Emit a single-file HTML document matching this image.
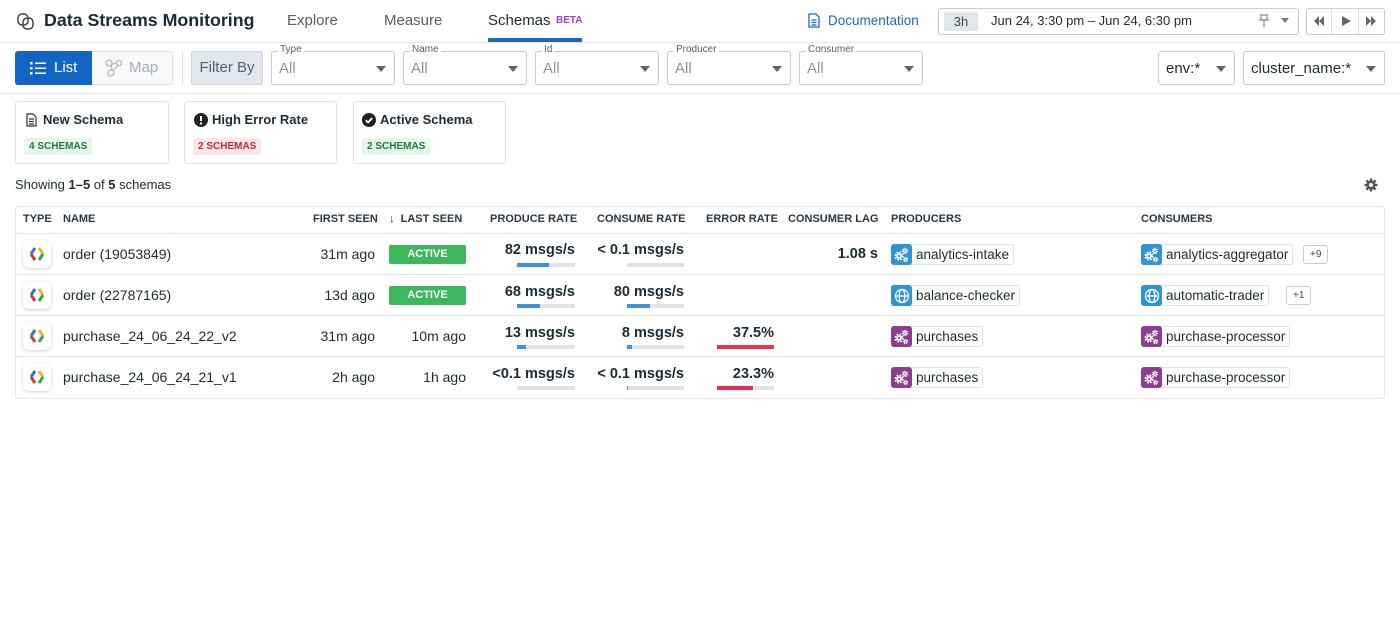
<!DOCTYPE html>
<html><head><meta charset="utf-8"><style>
*{box-sizing:border-box;margin:0;padding:0}
body{width:1400px;height:630px;background:#fff;font-family:"Liberation Sans",sans-serif;color:#1c2b34;position:relative;overflow:hidden;font-size:14px}
.a{position:absolute;white-space:nowrap}
.dd{position:absolute;top:51px;height:34px;border:1px solid #c8ccd2;border-radius:3px;background:#fff}
.dd .l{position:absolute;left:6px;top:-8px;background:#fff;padding:0 2px;font-size:10px;color:#55606a}
.dd .v{position:absolute;left:7px;top:8px;font-size:15px;color:#8a939b}
.car{position:absolute;width:0;height:0;border-left:5px solid transparent;border-right:5px solid transparent;border-top:6px solid #5a6470;top:14px}
.card{position:absolute;top:101px;height:63px;border:1px solid #dfe2e6;border-radius:3px}
.card .t{position:absolute;left:10px;top:10px;font-size:13px;font-weight:bold;color:#1c2b34}
.card .b{position:absolute;left:8px;top:36px;height:17px;padding:0 5px;font-size:10px;font-weight:bold;line-height:17px;border-radius:2px}
.th{position:absolute;top:213px;font-size:11px;font-weight:bold;color:#2b3842}
.row{position:absolute;left:15px;width:1370px;height:41px;border-top:1px solid #e3e6ea}
.r{position:absolute;text-align:right;font-size:14px}
.big{font-size:14.5px;font-weight:bold}
.bar{position:absolute;height:4px;background:#dfe3ea}
.bar i{position:absolute;left:0;top:0;height:4px;background:#3c91e0}
.tag{position:absolute;height:21px;border:1px solid #e0e3e7;border-radius:3px;padding:0 4px 0 24px;font-size:13.5px;line-height:19px;background:#fff}
.tag b{position:absolute;left:-1px;top:-1px;width:21px;height:21px;border-radius:3px}
.blue{background:#3293d1}.purp{background:#8c3e8f}
.more{position:absolute;height:19px;border:1px solid #c9cdd2;border-radius:3px;font-size:10px;line-height:17px;padding:0 6px;color:#444}
.act{position:absolute;left:389px;width:77px;height:19px;background:#3db65c;border-radius:2px;color:#fff;font-size:11px;font-weight:bold;text-align:center;line-height:19px}
.ic{position:absolute;left:23px;width:28px;height:28px;border-radius:6px;box-shadow:0 1px 3px rgba(0,0,0,.18);background:#fff}
.ic svg{position:absolute;left:4px;top:4px}
.g{position:absolute;left:2px;top:2px}
</style></head><body>
<svg class="a" style="left:16px;top:12px" width="20" height="20" viewBox="0 0 20 20" fill="none" stroke="#444" stroke-width="1.5"><rect x="2" y="2" width="10" height="11" rx="4"/><rect x="7" y="6" width="10" height="11" rx="4"/></svg>
<div class="a" style="left:44px;top:10px;font-size:17.8px;font-weight:bold;color:#1c2b34">Data Streams Monitoring</div>
<div class="a" style="left:287px;top:12px;font-size:15px;color:#555f68">Explore</div>
<div class="a" style="left:384px;top:12px;font-size:15px;color:#555f68">Measure</div>
<div class="a" style="left:488px;top:12px;font-size:15px;color:#1c2b34">Schemas</div>
<div class="a" style="left:556px;top:15px;font-size:10px;font-weight:bold;color:#a739e3">BETA</div>
<div class="a" style="left:488px;top:38px;width:94px;height:4px;background:#1f68c0"></div>
<div class="a" style="left:0;top:42px;width:1400px;height:1px;background:#e3e6ea"></div>
<svg class="a" style="left:808px;top:13px" width="12" height="15" viewBox="0 0 12 15" fill="none" stroke="#1f68c0" stroke-width="1.3"><path d="M1 1h7l3 3v10H1z"/><path d="M3.5 7h5M3.5 9.5h5M3.5 12h5"/></svg>
<div class="a" style="left:828px;top:13px;font-size:13.5px;color:#1f68c0">Documentation</div>
<div class="a" style="left:938px;top:8px;width:361px;height:27px;border:1px solid #c8ccd2;border-radius:3px"></div>
<div class="a" style="left:944px;top:12px;width:34px;height:19px;background:#e3e6ec;border-radius:2px;font-size:13px;text-align:center;line-height:19px;color:#444">3h</div>
<div class="a" style="left:991px;top:13px;font-size:13px;color:#1c2b34">Jun 24, 3:30 pm – Jun 24, 6:30 pm</div>
<svg class="a" style="left:1258px;top:14px" width="12" height="14" viewBox="0 0 12 14" fill="none" stroke="#888" stroke-width="1.2"><path d="M2 1h8M3 1v5h6V1M1 6h10M6 6v7"/></svg>
<div class="car" style="left:1281px;top:18px;border-top-color:#777;border-width:5px 4px 0 4px"></div>
<div class="a" style="left:1306px;top:8px;width:79px;height:27px;border:1px solid #c8ccd2;border-radius:3px"></div>
<div class="a" style="left:1331px;top:9px;width:1px;height:25px;background:#dde0e4"></div>
<div class="a" style="left:1358px;top:9px;width:1px;height:25px;background:#dde0e4"></div>
<svg class="a" style="left:1313px;top:15px" width="12" height="12" viewBox="0 0 12 12" fill="#666"><path d="M6 1L1 6l5 5zM11 1L6 6l5 5z"/></svg>
<svg class="a" style="left:1340px;top:15px" width="12" height="12" viewBox="0 0 12 12" fill="#666"><path d="M2 1l9 5-9 5z"/></svg>
<svg class="a" style="left:1365px;top:15px" width="12" height="12" viewBox="0 0 12 12" fill="#666"><path d="M1 1l5 5-5 5zM6 1l5 5-5 5z"/></svg>
<div class="a" style="left:15px;top:51px;width:158px;height:34px;border:1px solid #dfe2e6;border-radius:3px;background:#f7f8fa"></div>
<div class="a" style="left:15px;top:51px;width:77px;height:34px;background:#1265c2;border-radius:3px 0 0 3px"></div>
<svg class="a" style="left:30px;top:60px" width="16" height="16" viewBox="0 0 16 16" fill="#fff"><rect x="0" y="2" width="2.5" height="2.5"/><rect x="0" y="7" width="2.5" height="2.5"/><rect x="0" y="12" width="2.5" height="2.5"/><rect x="5" y="2.5" width="11" height="1.5"/><rect x="5" y="7.5" width="11" height="1.5"/><rect x="5" y="12.5" width="11" height="1.5"/></svg>
<div class="a" style="left:54px;top:59px;font-size:15px;color:#fff">List</div>
<svg class="a" style="left:104px;top:58px" width="20" height="20" viewBox="0 0 20 20" fill="none" stroke="#b4bac1" stroke-width="1.3"><circle cx="5" cy="5" r="3"/><circle cx="15" cy="5" r="2.5"/><circle cx="7" cy="15" r="3"/><path d="M7 7l1 5M8 6l5-1M9 13l5-6"/></svg>
<div class="a" style="left:129px;top:59px;font-size:15px;color:#a8afb6">Map</div>
<div class="a" style="left:182px;top:51px;width:1px;height:34px;background:#dfe2e6"></div>
<div class="a" style="left:191px;top:51px;width:72px;height:34px;background:#e3e6ec;border:1px solid #d2d6dc;border-radius:3px;font-size:15px;color:#55606a;line-height:32px;text-align:center">Filter By</div>
<div class="dd" style="left:271px;width:124px"><span class="l">Type</span><span class="v">All</span><i class="car" style="left:104px"></i></div>
<div class="dd" style="left:403px;width:124px"><span class="l">Name</span><span class="v">All</span><i class="car" style="left:104px"></i></div>
<div class="dd" style="left:535px;width:124px"><span class="l">Id</span><span class="v">All</span><i class="car" style="left:104px"></i></div>
<div class="dd" style="left:667px;width:124px"><span class="l">Producer</span><span class="v">All</span><i class="car" style="left:104px"></i></div>
<div class="dd" style="left:799px;width:124px"><span class="l">Consumer</span><span class="v">All</span><i class="car" style="left:104px"></i></div>
<div class="dd" style="left:1158px;width:77px"><span class="v" style="color:#1c2b34">env:*</span><i class="car" style="left:57px"></i></div>
<div class="dd" style="left:1243px;width:142px"><span class="v" style="color:#1c2b34">cluster_name:*</span><i class="car" style="left:122px"></i></div>
<div class="a" style="left:0;top:93px;width:1400px;height:1px;background:#e3e6ea"></div>
<div class="card" style="left:15px;width:154px"><svg class="a" style="left:10px;top:11px" width="11" height="14" viewBox="0 0 11 14" fill="none" stroke="#333" stroke-width="1.2"><path d="M1 1h6l3 3v9H1z"/><path d="M3 6h5M3 8.5h5M3 11h5"/></svg><span class="t" style="left:27px">New Schema</span><span class="b" style="background:#e6f6ea;color:#217a3c">4 SCHEMAS</span></div>
<div class="card" style="left:184px;width:153px"><svg class="a" style="left:9px;top:11px" width="14" height="14" viewBox="0 0 14 14"><circle cx="7" cy="7" r="7" fill="#222"/><rect x="6" y="3" width="2" height="5" fill="#fff"/><rect x="6" y="9.5" width="2" height="2" fill="#fff"/></svg><span class="t" style="left:27px">High Error Rate</span><span class="b" style="background:#fbe6e9;color:#c7283f">2 SCHEMAS</span></div>
<div class="card" style="left:353px;width:153px"><svg class="a" style="left:8px;top:11px" width="14" height="14" viewBox="0 0 14 14"><circle cx="7" cy="7" r="7" fill="#222"/><path d="M3.8 7.2l2.2 2.2 4.2-4.4" stroke="#fff" stroke-width="1.8" fill="none"/></svg><span class="t" style="left:26px">Active Schema</span><span class="b" style="background:#e6f6ea;color:#217a3c">2 SCHEMAS</span></div>
<div class="a" style="left:15px;top:177px;font-size:13px">Showing <b>1–5</b> of <b>5</b> schemas</div>
<svg class="a" style="left:1364px;top:178px" width="14" height="14" viewBox="0 0 14 14"><g fill="#555"><circle cx="7" cy="7" r="4.5"/><rect x="5.8" y="0.5" width="2.4" height="13"/><rect x="0.5" y="5.8" width="13" height="2.4"/><rect x="5.8" y="0.5" width="2.4" height="13" transform="rotate(45 7 7)"/><rect x="5.8" y="0.5" width="2.4" height="13" transform="rotate(-45 7 7)"/></g><circle cx="7" cy="7" r="2" fill="#fff"/></svg>
<div class="a" style="left:15px;top:206px;width:1370px;height:193px;border:1px solid #e3e6ea;border-radius:3px"></div>
<div class="th" style="left:23px">TYPE</div>
<div class="th" style="left:63px">NAME</div>
<div class="th" style="left:313px">FIRST SEEN</div>
<div class="th" style="left:389px">↓&nbsp; LAST SEEN</div>
<div class="th" style="left:490px">PRODUCE RATE</div>
<div class="th" style="left:597px">CONSUME RATE</div>
<div class="th" style="left:706px">ERROR RATE</div>
<div class="th" style="left:788px">CONSUMER LAG</div>
<div class="th" style="left:891px">PRODUCERS</div>
<div class="th" style="left:1141px">CONSUMERS</div>
<div class="row" style="top:233px"></div><div class="row" style="top:274px"></div><div class="row" style="top:315px"></div><div class="row" style="top:356px"></div>

<div class="ic" style="top:240px"><svg width="20" height="20" viewBox="0 0 20 20" fill="none" stroke-width="3"><path d="M8 4L4 10" stroke="#3d6fd8"/><path d="M4 10l4 6" stroke="#d53b30"/><path d="M12 4l4 6" stroke="#f2b52b"/><path d="M16 10l-4 6" stroke="#34a853"/></svg></div>
<div class="ic" style="top:281px"><svg width="20" height="20" viewBox="0 0 20 20" fill="none" stroke-width="3"><path d="M8 4L4 10" stroke="#3d6fd8"/><path d="M4 10l4 6" stroke="#d53b30"/><path d="M12 4l4 6" stroke="#f2b52b"/><path d="M16 10l-4 6" stroke="#34a853"/></svg></div>
<div class="ic" style="top:322px"><svg width="20" height="20" viewBox="0 0 20 20" fill="none" stroke-width="3"><path d="M8 4L4 10" stroke="#3d6fd8"/><path d="M4 10l4 6" stroke="#d53b30"/><path d="M12 4l4 6" stroke="#f2b52b"/><path d="M16 10l-4 6" stroke="#34a853"/></svg></div>
<div class="ic" style="top:363px"><svg width="20" height="20" viewBox="0 0 20 20" fill="none" stroke-width="3"><path d="M8 4L4 10" stroke="#3d6fd8"/><path d="M4 10l4 6" stroke="#d53b30"/><path d="M12 4l4 6" stroke="#f2b52b"/><path d="M16 10l-4 6" stroke="#34a853"/></svg></div>

<div class="a" style="left:63px;top:246px">order (19053849)</div>
<div class="a" style="left:63px;top:287px">order (22787165)</div>
<div class="a" style="left:63px;top:328px">purchase_24_06_24_22_v2</div>
<div class="a" style="left:63px;top:369px">purchase_24_06_24_21_v1</div>
<div class="r a" style="right:1025px;top:246px">31m ago</div>
<div class="r a" style="right:1025px;top:287px">13d ago</div>
<div class="r a" style="right:1025px;top:328px">31m ago</div>
<div class="r a" style="right:1025px;top:369px">2h ago</div>
<div class="act" style="top:245px">ACTIVE</div>
<div class="act" style="top:286px">ACTIVE</div>
<div class="r a" style="right:934px;top:328px">10m ago</div>
<div class="r a" style="right:934px;top:369px">1h ago</div>

<div class="r a big" style="right:825px;top:242px">82 msgs/s</div>
<div class="r a big" style="right:825px;top:284px">68 msgs/s</div>
<div class="r a big" style="right:825px;top:325px">13 msgs/s</div>
<div class="r a big" style="right:825px;top:366px">&lt;0.1 msgs/s</div>
<div class="bar" style="left:517px;top:263px;width:58px"><i style="width:32px"></i></div>
<div class="bar" style="left:517px;top:304px;width:58px"><i style="width:23px"></i></div>
<div class="bar" style="left:517px;top:345px;width:58px"><i style="width:9px"></i></div>
<div class="bar" style="left:517px;top:386px;width:58px"></div>
<div class="r a big" style="right:716px;top:242px">&lt; 0.1 msgs/s</div>
<div class="r a big" style="right:716px;top:284px">80 msgs/s</div>
<div class="r a big" style="right:716px;top:325px">8 msgs/s</div>
<div class="r a big" style="right:716px;top:366px">&lt; 0.1 msgs/s</div>
<div class="bar" style="left:627px;top:263px;width:57px"></div>
<div class="bar" style="left:627px;top:304px;width:57px"><i style="width:23px"></i></div>
<div class="bar" style="left:627px;top:345px;width:57px"><i style="width:5px"></i></div>
<div class="bar" style="left:627px;top:386px;width:57px"><i style="width:1px"></i></div>
<div class="r a big" style="right:626px;top:325px">37.5%</div>
<div class="r a big" style="right:626px;top:366px">23.3%</div>
<div class="bar" style="left:717px;top:345px;width:57px"><i style="width:57px;background:#e5334b"></i></div>
<div class="bar" style="left:717px;top:386px;width:57px"><i style="width:36px;background:#e5334b"></i></div>
<div class="r a big" style="right:522px;top:246px">1.08 s</div>

<svg width="0" height="0" style="position:absolute"><defs><g id="gr"><circle cx="7" cy="11" r="3.5" fill="none" stroke="#fff" stroke-width="2.2" stroke-dasharray="1.6 1.2"/><circle cx="7" cy="11" r="2.6" fill="#fff"/><circle cx="7" cy="11" r="1.1" fill="currentColor"/><circle cx="13" cy="6" r="2.4" fill="none" stroke="#fff" stroke-width="1.6" stroke-dasharray="1.2 0.9"/><circle cx="13" cy="6" r="1.8" fill="#fff"/><circle cx="13" cy="6" r="0.8" fill="currentColor"/><circle cx="13.5" cy="14.5" r="2" fill="none" stroke="#fff" stroke-width="1.4" stroke-dasharray="1 0.8"/><circle cx="13.5" cy="14.5" r="1.5" fill="#fff"/><circle cx="13.5" cy="14.5" r="0.6" fill="currentColor"/></g><g id="gl" fill="none" stroke="#fff" stroke-width="1.3"><circle cx="10" cy="10" r="6.5"/><ellipse cx="10" cy="10" rx="2.8" ry="6.5"/><path d="M3.5 10h13"/></g></defs></svg>

<div class="tag" style="left:891px;top:244px"><b class="blue"><svg class="g" width="18" height="18" viewBox="1 1 18 18" style="color:#3293d1"><use href="#gr"/></svg></b>analytics-intake</div>
<div class="tag" style="left:891px;top:285px"><b class="blue"><svg class="g" width="18" height="18" viewBox="1 1 18 18"><use href="#gl"/></svg></b>balance-checker</div>
<div class="tag" style="left:891px;top:326px"><b class="purp"><svg class="g" width="18" height="18" viewBox="1 1 18 18" style="color:#8c3e8f"><use href="#gr"/></svg></b>purchases</div>
<div class="tag" style="left:891px;top:367px"><b class="purp"><svg class="g" width="18" height="18" viewBox="1 1 18 18" style="color:#8c3e8f"><use href="#gr"/></svg></b>purchases</div>
<div class="tag" style="left:1141px;top:244px"><b class="blue"><svg class="g" width="18" height="18" viewBox="1 1 18 18" style="color:#3293d1"><use href="#gr"/></svg></b>analytics-aggregator</div>
<div class="tag" style="left:1141px;top:285px"><b class="blue"><svg class="g" width="18" height="18" viewBox="1 1 18 18"><use href="#gl"/></svg></b>automatic-trader</div>
<div class="tag" style="left:1141px;top:326px"><b class="purp"><svg class="g" width="18" height="18" viewBox="1 1 18 18" style="color:#8c3e8f"><use href="#gr"/></svg></b>purchase-processor</div>
<div class="tag" style="left:1141px;top:367px"><b class="purp"><svg class="g" width="18" height="18" viewBox="1 1 18 18" style="color:#8c3e8f"><use href="#gr"/></svg></b>purchase-processor</div>
<div class="more" style="left:1303px;top:245px">+9</div>
<div class="more" style="left:1286px;top:286px">+1</div>
</body></html>
